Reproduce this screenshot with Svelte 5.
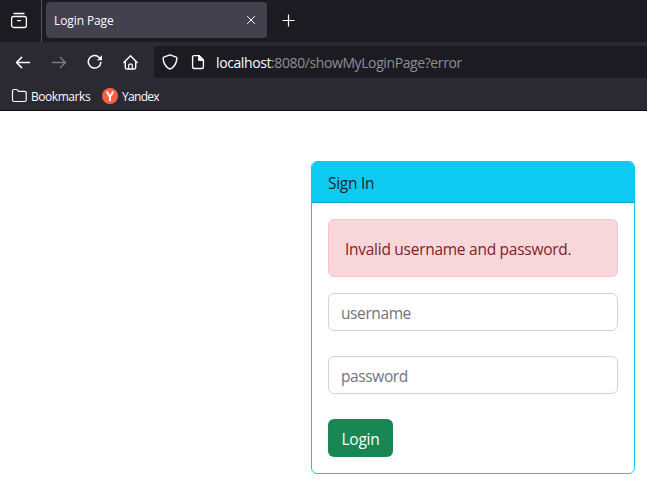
<script>
  const links = [
    { label: 'Bookmarks', kind: 'folder' },
    { label: 'Yandex', kind: 'yandex' }
  ];
</script>

<div class="browser">
  <div class="tabs">
    <div class="overview">
      <svg width="18" height="18" viewBox="0 0 18 18" fill="none" stroke="#fbfbfe" stroke-width="1.3" stroke-linecap="round">
        <path d="M4 1.5h10" />
        <rect x="1.6" y="4.500" width="14.800" height="11" rx="2" />
        <path d="M7.500 8.600h3" />
      </svg>
    </div>
    <div class="tab">
      <span class="title">Login Page</span>
      <svg class="close" width="10" height="10" viewBox="0 0 10 10" stroke="#fbfbfe" stroke-width="1"><path d="M1.200 1.200l7.600 7.600M8.800 1.200l-7.600 7.600" /></svg>
    </div>
    <svg class="plus" width="13" height="13" viewBox="0 0 13 13" stroke="#fbfbfe" stroke-width="1.2"><path d="M6.500 .5v12M.5 6.500h12" /></svg>
  </div>

  <div class="nav">
    <div class="buttons">
      <svg width="16" height="16" viewBox="0 0 16 16" fill="none" stroke="#fbfbfe" stroke-width="1.5" stroke-linecap="round" stroke-linejoin="round"><path d="M14.500 8.500H1.700M6.600 3.400L1.500 8.500L6.600 13.600" /></svg>
      <svg width="16" height="16" viewBox="0 0 16 16" fill="none" stroke="#7b7a82" stroke-width="1.4" stroke-linecap="round" stroke-linejoin="round"><path d="M1.500 8.500h12.800M9.400 3.400l5.100 5.100L9.400 13.600" /></svg>
      <svg width="16" height="16" viewBox="0 0 16 16" fill="none" stroke="#fbfbfe" stroke-width="1.5" stroke-linecap="round">
        <path d="M12.200 3.400A6.300 6.300 0 1 0 13.900 8.400" />
        <path d="M15 1.200v5.100H9.900z" fill="#fbfbfe" stroke="none" />
      </svg>
      <svg width="16" height="16" viewBox="0 0 16 16" fill="none" stroke="#fbfbfe" stroke-width="1.4" stroke-linecap="round" stroke-linejoin="round">
        <path d="M.9 8.500L7.500 1.800l6.600 6.700M2.300 7.200v6.200q0 1.600 1.600 1.600h7.200q1.600 0 1.600-1.600V7.200" />
        <path d="M5.700 15v-4q0-.9.9-.9h1.800q.9 0 .9.9V15" stroke-width="1.2" />
      </svg>
    </div>
    <div class="url">
      <svg width="16" height="16" viewBox="0 0 16 16" fill="none" stroke="#fbfbfe" stroke-width="1.4" stroke-linejoin="round"><path d="M8 .8l6.200 2.300q.7.3.7 1C14.700 9 12.400 13 8 15.200C3.600 13 1.300 9 1.100 4.100q0-.7.7-1z" /></svg>
      <svg width="16" height="16" viewBox="0 0 16 16" fill="none" stroke="#fbfbfe" stroke-width="1.4" stroke-linejoin="round">
        <path d="M4 1.600h5L13.400 6v7q0 1.500-1.500 1.500H4Q2.600 14.500 2.600 13V3Q2.600 1.600 4 1.600z" />
        <path d="M8.800 1.600V6.200h4.600z" fill="#fbfbfe" />
      </svg>
      <span class="address"><b>localhost</b>:8080/showMyLoginPage?error</span>
    </div>
  </div>

  <div class="bookmarks">
    {#each links as link}
      <span class="bookmark {link.kind}">
        {#if link.kind === 'folder'}
          <svg width="16" height="16" viewBox="0 0 16 16" fill="none" stroke="#fbfbfe" stroke-width="1.200" stroke-linejoin="round"><path d="M1.500 12V3Q1.500 1.500 3 1.500h2.300q.7 0 1.200.6l1 1.200h6q1.700 0 1.700 1.600V12q0 1.500-1.600 1.500H3Q1.500 13.500 1.500 12z" /></svg>
        {:else}
          <svg width="16" height="16" viewBox="0 0 16 16"><circle cx="8" cy="8" r="8" fill="#ff6044" /><path d="M4.700 3.400L8 8.900l3.300-5.500M8 8.300v4.700" fill="none" stroke="#fff" stroke-width="2" /></svg>
        {/if}
        <span class="label">{link.label}</span>
      </span>
    {/each}
  </div>
</div>

<main>
  <section class="card">
    <header><span>Sign In</span></header>
    <form>
      <div class="alert"><span>Invalid username and password.</span></div>
      <input type="text" placeholder="username" aria-label="username" />
      <input type="password" placeholder="password" aria-label="password" />
      <button type="button"><span>Login</span></button>
    </form>
  </section>
</main>

<style>
  :global(body) { background: #fff; overflow: hidden; }
  .browser, main { font-family: "Open Sans", "Noto Sans", sans-serif; }
  .browser { height: 111px; box-sizing: border-box; border-bottom: 1px solid #0c0c0d; background: #2b2a33; color: #fbfbfe; font-size: 12px; }
  svg { display: block; flex: none; }
  .tabs { height: 42px; display: flex; background: #1c1b22; }
  .overview { width: 41px; border-right: 1px solid #56555d; box-sizing: content-box; display: flex; }
  .overview svg { margin: 12px 0 0 10px; }
  .tab { width: 221px; height: 36px; margin: 2px 0 0 4px; border-radius: 4px; background: #42414d; display: flex; align-items: center; justify-content: space-between; padding: 0 11px 0 8px; box-sizing: border-box; }
  .title { letter-spacing: -0.1px; }
  .plus { margin: 14px 0 0 15px; }
  .nav { height: 40px; display: flex; align-items: center; }
  .buttons { display: flex; gap: 20px; padding-left: 15px; width: 139px; flex: none; }
  .url { flex: 1; height: 32px; border-radius: 4px 0 0 4px; background: #1c1b22; display: flex; align-items: center; padding-left: 8px; gap: 12px; }
  .address { color: #8f8e96; font-size: 14px; letter-spacing: -0.4px; margin-left: -2px; padding-top: 1px; white-space: nowrap; }
  .address b { font-weight: 400; color: #fbfbfe; }
  .bookmarks { display: flex; gap: 12px; padding: 6px 0 0 11px; }
  .bookmark { display: flex; gap: 4px; height: 16px; align-items: center; }
  .folder .label { width: 59px; }
  .label { letter-spacing: -0.45px; padding-top: 1px; }
  .yandex .label { letter-spacing: -0.7px; }
  main { padding: 50px 12px 0 0; display: flex; justify-content: flex-end; font-size: 15.5px; letter-spacing: -0.27px; color: #212529; }
  .card { width: 324px; height: 313px; box-sizing: border-box; border: 1px solid #0dcaf0; border-radius: 6px; }
  header { height: 41px; box-sizing: border-box; border-bottom: 1px solid #0ca5c6; background: #0dcaf0; border-radius: 5px 5px 0 0; padding: 2px 16px 0; display: flex; align-items: center; }
  form { padding: 16px; display: flex; flex-direction: column; align-items: flex-start; }
  .alert { width: 100%; height: 58px; box-sizing: border-box; margin-bottom: 16px; padding: 2px 16px 0; display: flex; align-items: center; color: #842029; background: #f8d7da; border: 1px solid #f5c2c7; border-radius: 6px; white-space: nowrap; }
  input { width: 100%; height: 38px; box-sizing: border-box; margin: 0 0 25px; padding: 2px 12px 0; border: 1px solid #ced4da; border-radius: 6px; background: #fff; font: inherit; letter-spacing: -0.4px; outline: none; }
  input::placeholder { color: #6c757d; opacity: 1; }
  button { height: 38px; width: 65px; padding: 2px 0 0; border: 0; border-radius: 6px; background: #198754; color: #fff; font: inherit; letter-spacing: inherit; }
</style>
